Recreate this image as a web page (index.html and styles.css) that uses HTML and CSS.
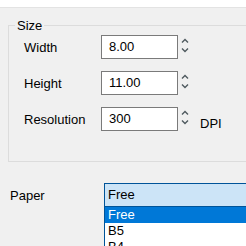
FILE: index.html
```html
<!DOCTYPE html>
<html lang="en">
<head>
    <meta charset="UTF-8">
    <title>Page Setup</title>
    <link rel="stylesheet" href="styles.css">
</head>
<body>
    <div class="topbar"></div>
    <div class="panel">
        <fieldset class="group">
            <legend>Size</legend>
            <div class="row">
                <label>Width</label>
                <div class="box">8.00</div>
                <div class="spin">
                    <svg width="8" height="5" viewBox="0 0 8 5"><path d="M1 4.5 L4 1.5 L7 4.5" fill="none" stroke="#4f5a5f" stroke-width="1.4"/></svg>
                    <svg width="8" height="5" viewBox="0 0 8 5"><path d="M1 0.5 L4 3.5 L7 0.5" fill="none" stroke="#4f5a5f" stroke-width="1.4"/></svg>
                </div>
            </div>
            <div class="row">
                <label>Height</label>
                <div class="box">11.00</div>
                <div class="spin">
                    <svg width="8" height="5" viewBox="0 0 8 5"><path d="M1 4.5 L4 1.5 L7 4.5" fill="none" stroke="#4f5a5f" stroke-width="1.4"/></svg>
                    <svg width="8" height="5" viewBox="0 0 8 5"><path d="M1 0.5 L4 3.5 L7 0.5" fill="none" stroke="#4f5a5f" stroke-width="1.4"/></svg>
                </div>
            </div>
            <div class="row">
                <label>Resolution</label>
                <div class="box">300</div>
                <div class="spin">
                    <svg width="8" height="5" viewBox="0 0 8 5"><path d="M1 4.5 L4 1.5 L7 4.5" fill="none" stroke="#4f5a5f" stroke-width="1.4"/></svg>
                    <svg width="8" height="5" viewBox="0 0 8 5"><path d="M1 0.5 L4 3.5 L7 0.5" fill="none" stroke="#4f5a5f" stroke-width="1.4"/></svg>
                </div>
                <span class="unit">DPI</span>
            </div>
        </fieldset>

        <div class="paper-row">
            <label>Paper</label>
            <div class="combo">
                <div class="combo-head">Free</div>
                <ul class="combo-list">
                    <li class="selected">Free</li>
                    <li>B5</li>
                    <li>B4</li>
                </ul>
            </div>
        </div>
    </div>
</body>
</html>
```
FILE: styles.css
```css
/* Global Styles */
body {
    font-family: 'Liberation Sans', Arial, sans-serif;
    font-size: 13px;
    background-color: #f0f0f0;
    margin: 0;
    padding: 0;
    color: #000;
    width: 246px;
    height: 246px;
    overflow: hidden;
}

.topbar {
    height: 7px;
    background-color: #fff;
    border-bottom: 1px solid #e3e3e3;
}

.panel {
    padding-left: 8px;
}

/* Size group box */
.group {
    width: 300px;
    margin: 10px 0 0 0;
    padding: 2px 0 30px 15px;
    border: 1px solid #dcdcdc;
    display: flex;
    flex-direction: column;
    gap: 12px;
}

.group legend {
    margin-left: -9px;
    padding: 0 2px;
    line-height: 15px;
}

.row {
    display: flex;
    align-items: center;
    height: 24px;
}

.row label {
    width: 77px;
    flex-shrink: 0;
}

.box {
    width: 68px;
    height: 22px;
    line-height: 22px;
    padding-left: 7px;
    background-color: #fff;
    border: 1px solid #7a7a7a;
    flex-shrink: 0;
}

.spin {
    display: flex;
    flex-direction: column;
    gap: 5px;
    margin-left: 3px;
    margin-top: -3px;
}

.spin svg {
    display: block;
}

.unit {
    margin-left: 11px;
    margin-top: 8px;
}

/* Paper combo */
.paper-row {
    display: flex;
    align-items: flex-start;
    margin-top: 21px;
    margin-left: 2px;
}

.paper-row label {
    width: 94px;
    flex-shrink: 0;
    margin-top: 5px;
}

.combo {
    position: relative;
    width: 200px;
    flex-shrink: 0;
}

.combo-head {
    height: 22px;
    line-height: 22px;
    padding-left: 3px;
    background-color: #cce4f7;
    border: 1px solid #005499;
}

.combo-list {
    position: absolute;
    top: 23px;
    left: 0;
    right: 0;
    margin: 0;
    padding: 0;
    list-style: none;
    background-color: #fff;
    border-left: 1px solid #005499;
    border-top: 1px solid #005499;
}

.combo-list li {
    height: 16px;
    line-height: 16px;
    padding-left: 3px;
}

.combo-list li.selected {
    background-color: #0078d7;
    color: #fff;
}
```
